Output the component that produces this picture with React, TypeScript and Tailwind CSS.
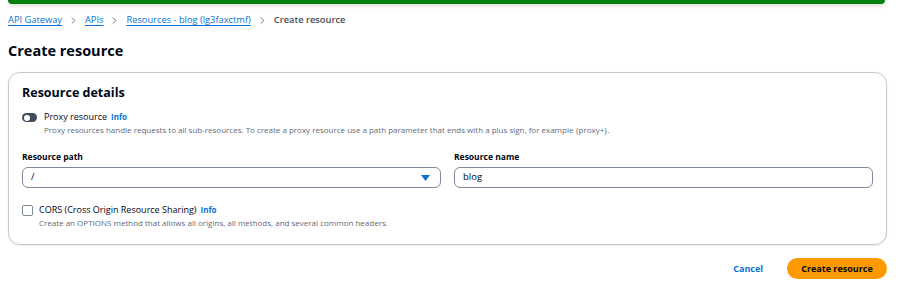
import { ChevronRight } from "lucide-react";

function Info() {
  return <span className="ml-1 text-[8px] font-bold text-[#0972d3]">Info</span>;
}

export default function App() {
  return (
    <div className="w-[904px] h-[286px] bg-white font-['Open_Sans',sans-serif] text-[#000716] overflow-hidden pl-2 pr-[17px]">
      {/* flash bar */}
      <div className="mr-[2px] h-1 rounded-b-lg bg-[#037f0c] shadow-[0_2px_4px_rgba(0,0,0,0.15)]" />

      {/* Breadcrumbs */}
      <nav className="flex items-center gap-[6px] mt-[8px] text-[9.3px] leading-4">
        <a className="text-[#0972d3] underline underline-offset-2">API Gateway</a>
        <ChevronRight size={11} className="text-[#5f6b7a]" />
        <a className="text-[#0972d3] underline underline-offset-2">APIs</a>
        <ChevronRight size={11} className="text-[#5f6b7a]" />
        <a className="text-[#0972d3] underline underline-offset-2">Resources - blog (lg3faxctmf)</a>
        <ChevronRight size={11} className="text-[#5f6b7a]" />
        <span className="font-semibold text-[#414d5c]">Create resource</span>
      </nav>

      <h1 className="mt-[13px] text-[14.5px] font-bold leading-5">Create resource</h1>

      {/* Card */}
      <section className="mt-[11px] rounded-[12px] border border-[#c6c6cd] bg-white px-[13px] pt-[10px] pb-[15px] shadow-[0_1px_2px_rgba(0,7,22,0.08)]">
        <h2 className="text-[12.5px] font-bold leading-5">Resource details</h2>

        <div className="mt-[7px] flex gap-[7px]">
          <div className="mt-[3px] h-[9px] w-[15px] rounded-full bg-[#414d5c] flex items-center px-[2px]">
            <div className="h-[6px] w-[6px] rounded-full bg-white" />
          </div>
          <div>
            <div className="text-[9px] leading-[14px]">
              Proxy resource
              <Info />
            </div>
            <p className="text-[8px] leading-[12px] text-[#5f6b7a]">
              Proxy resources handle requests to all sub-resources. To create a proxy resource use a path parameter that ends with a plus sign, for example {"{proxy+}"}.
            </p>
          </div>
        </div>

        <div className="mt-[15px] grid grid-cols-2 gap-[13px]">
          <div>
            <label className="block text-[8.5px] font-bold leading-3">Resource path</label>
            <div className="mt-[4px] flex h-[21px] items-center justify-between rounded-[6px] border border-[#7d8998] pl-[8px] pr-[10px] text-[9.5px]">
              <span>/</span>
              <svg width="9" height="6" viewBox="0 0 9 6">
                <path d="M0 0h9L4.5 6z" fill="#0972d3" />
              </svg>
            </div>
          </div>
          <div>
            <label className="block text-[8.5px] font-bold leading-3">Resource name</label>
            <div className="mt-[4px] flex h-[21px] items-center rounded-[6px] border border-[#7d8998] pl-[8px] text-[9.5px]">
              blog
            </div>
          </div>
        </div>

        <div className="mt-[15px] flex gap-[6px]">
          <div className="mt-[2px] h-[11px] w-[11px] rounded-[2px] border border-[#7d8998]" />
          <div>
            <div className="text-[9px] leading-[14px]">
              CORS (Cross Origin Resource Sharing)
              <Info />
            </div>
            <p className="text-[8px] leading-[12px] text-[#5f6b7a]">
              Create an OPTIONS method that allows all origins, all methods, and several common headers.
            </p>
          </div>
        </div>
      </section>

      {/* Actions */}
      <div className="mt-[13px] flex items-center justify-end gap-6">
        <button className="text-[9px] font-bold text-[#0972d3]">Cancel</button>
        <button className="h-[21px] w-[100px] rounded-full bg-[#ff9900] text-[9px] font-bold text-[#000716]">
          Create resource
        </button>
      </div>
    </div>
  );
}
